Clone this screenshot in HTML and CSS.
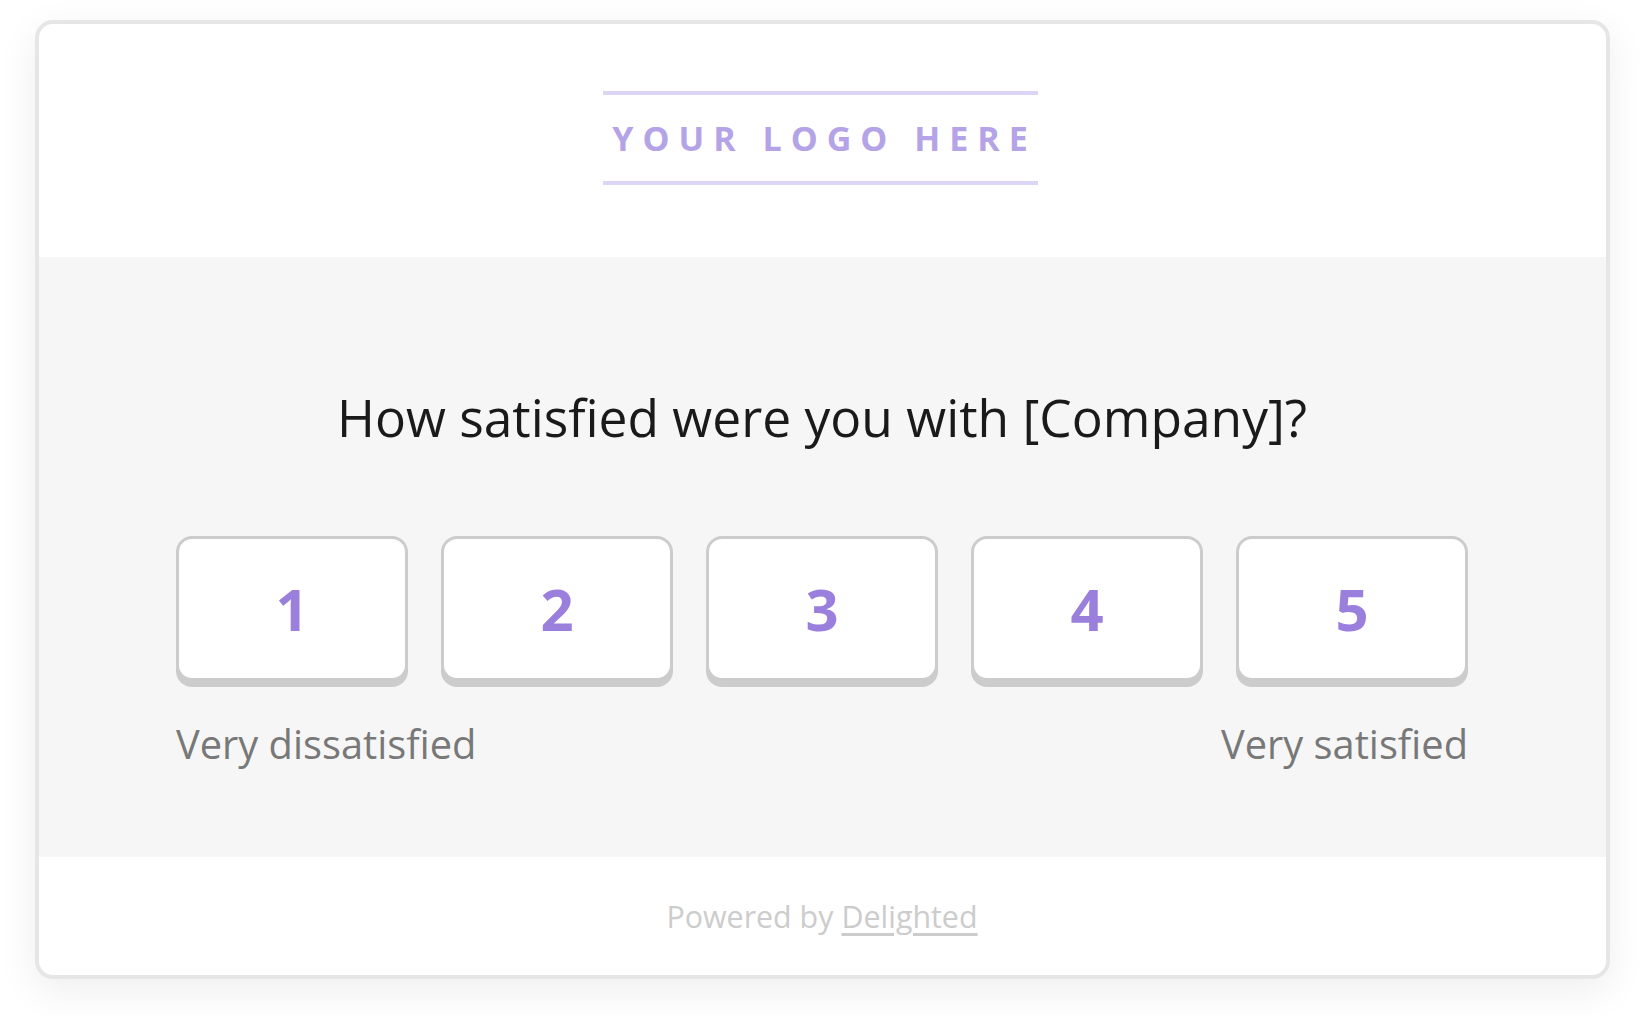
FILE: index.html
```html
<!DOCTYPE html>
<html lang="en">
<head>
    <meta charset="UTF-8">
    <meta name="viewport" content="width=device-width, initial-scale=1.0">
    <title>Survey</title>
    <link rel="stylesheet" href="styles.css">
</head>
<body>
    <div class="survey-card">
        <div class="survey-header">
            <div class="logo">YOUR LOGO HERE</div>
        </div>
        <div class="survey-body">
            <h1 class="question">How satisfied were you with [Company]?</h1>
            <div class="scale">
                <button class="score-btn" type="button">1</button>
                <button class="score-btn" type="button">2</button>
                <button class="score-btn" type="button">3</button>
                <button class="score-btn" type="button">4</button>
                <button class="score-btn" type="button">5</button>
            </div>
            <div class="scale-labels">
                <span>Very dissatisfied</span>
                <span>Very satisfied</span>
            </div>
        </div>
        <div class="survey-footer">
            Powered by <a href="#">Delighted</a>
        </div>
    </div>
</body>
</html>
```

FILE: styles.css
```css
body {
    margin: 0;
    padding: 20px 0 37px;
    background-color: white;
    font-family: "Open Sans", Arial, sans-serif;
}
.survey-card {
    box-sizing: border-box;
    width: 1575px;
    height: 959px;
    margin: 0 auto;
    border: 4px solid rgb(230, 230, 230);
    border-radius: 18px;
    overflow: hidden;
    background-color: white;
    box-shadow: 0 12px 40px rgba(0, 0, 0, 0.07);
    display: flex;
    flex-direction: column;
}
.survey-header {
    height: 233px;
    display: flex;
    justify-content: center;
    padding-top: 67px;
    padding-right: 4px;
    box-sizing: border-box;
}
.logo {
    width: 435px;
    height: 94px;
    box-sizing: border-box;
    border-top: 4px solid rgb(221, 213, 245);
    border-bottom: 4px solid rgb(221, 213, 245);
    display: flex;
    align-items: center;
    justify-content: center;
    padding-left: 9px;
    white-space: nowrap;
    color: rgb(180, 163, 230);
    font-size: 34px;
    font-weight: 700;
    letter-spacing: 9px;
}
.survey-body {
    height: 600px;
    background-color: rgb(246, 246, 246);
    display: flex;
    flex-direction: column;
    align-items: center;
}
.question {
    margin: 130px 0 0;
    font-size: 51.5px;
    font-weight: 400;
    line-height: 60px;
    color: rgb(26, 26, 26);
}
.scale {
    display: flex;
    gap: 33px;
    margin-top: 89px;
}
.score-btn {
    width: 232px;
    height: 145px;
    background-color: white;
    border: 3px solid rgb(204, 204, 204);
    border-radius: 16px;
    box-shadow: 0 6px 0 rgb(204, 204, 204);
    color: rgb(155, 127, 220);
    font-family: "Open Sans", Arial, sans-serif;
    font-size: 58px;
    font-weight: 700;
    cursor: pointer;
    padding: 0;
}
.scale-labels {
    width: 1292px;
    display: flex;
    justify-content: space-between;
    margin-top: 39px;
    font-size: 39.8px;
    line-height: 48px;
    color: rgb(120, 120, 120);
}
.survey-footer {
    flex: 1;
    display: flex;
    align-items: center;
    justify-content: center;
    font-size: 30.4px;
    color: rgb(204, 204, 204);
}
.survey-footer a {
    color: rgb(204, 204, 204);
    margin-left: 8px;
    text-underline-offset: 5px;
}
```
